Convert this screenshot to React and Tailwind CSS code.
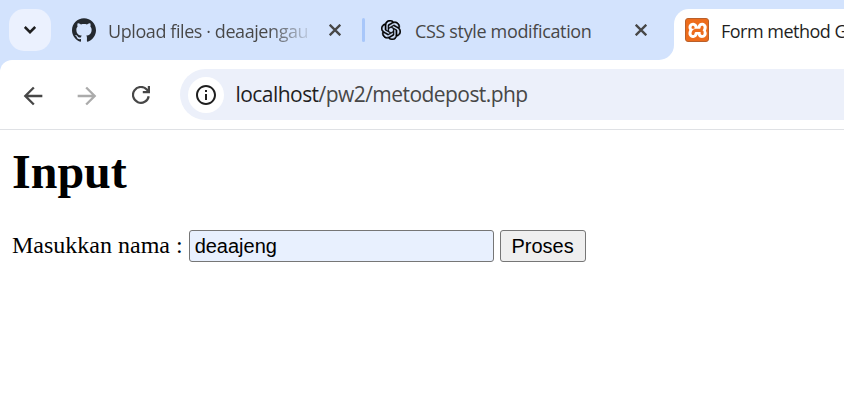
import { SiGithub, SiOpenai, SiXampp } from "react-icons/si";
import { MdArrowBack, MdArrowForward, MdOutlineInfo } from "react-icons/md";

function CloseIcon() {
  return (
    <svg className="h-3 w-3 shrink-0" viewBox="0 0 12 12" fill="none" stroke="#474747" strokeWidth="2.3">
      <path d="M.7.7l10.6 10.6M11.3.7L.7 11.3" />
    </svg>
  );
}

function ReloadIcon() {
  return (
    <svg className="ml-[31px] mt-[26px] h-[18px] w-[18px] shrink-0" viewBox="0 0 18 18" fill="none" stroke="#474747" strokeWidth="2.2">
      <path d="M16.7 10.2A7.9 7.9 0 1 1 14.8 3.6L17 6" />
      <path d="M16.9 0v6.1H10.8" />
    </svg>
  );
}

function TabStrip() {
  return (
    <div className="flex h-[60px] items-start bg-[#d3e3fd] font-['Open_Sans','Noto_Sans',sans-serif] text-[18px]">
      <button className="ml-[9px] mt-[9px] flex h-[42px] w-[42px] shrink-0 items-center justify-center rounded-[15px] bg-[#ebf1fe]">
        <svg className="h-2 w-3" viewBox="0 0 12 8" fill="none" stroke="#1f1f1f" strokeWidth="2.5">
          <path d="M.8 1L6 6.2 11.2 1" />
        </svg>
      </button>
      <div className="ml-[21px] flex h-[60px] w-[290px] shrink-0 items-center">
        <SiGithub className="h-6 w-6 shrink-0 text-[#24292f]" />
        <span className="ml-3 w-[200px] whitespace-nowrap bg-linear-to-r from-[#474747] from-80% to-[#474747]/15 bg-clip-text pt-px leading-7 tracking-[-0.42px] text-transparent">
          Upload files · deaajengau
        </span>
        <span className="ml-[20.5px] flex"><CloseIcon /></span>
      </div>
      <div className="mt-[18px] h-6 w-[3px] shrink-0 rounded-sm bg-[#a8c7fa]" />
      <div className="ml-4 flex h-[60px] w-[278px] shrink-0 items-center">
        <SiOpenai className="h-5 w-5 shrink-0 stroke-black stroke-[0.5] text-black" />
        <span className="ml-[14px] w-[219.5px] whitespace-nowrap pt-px leading-7 tracking-[-0.35px] text-[#474747]">
          CSS style modification
        </span>
        <CloseIcon />
      </div>
      <svg className="mt-[45px] h-[15px] w-[15px] shrink-0" viewBox="0 0 15 15">
        <path d="M15 0v15H0A15 15 0 0 0 15 0z" fill="#fff" />
      </svg>
      <div className="mt-[9px] flex h-[51px] min-w-0 flex-1 items-start overflow-hidden rounded-tl-[15px] bg-white pl-[11px]">
        <span className="mt-[9px] flex h-6 w-6 shrink-0 items-center justify-center overflow-hidden rounded-[3px] border border-[#b9602b] bg-[#ed6c1c]">
          <span className="flex h-5 w-5 shrink-0 items-center justify-center overflow-hidden bg-white">
            <SiXampp className="h-[25px] w-[25px] shrink-0 text-[#ed6c1c]" />
          </span>
        </span>
        <span className="ml-3 mt-2 whitespace-nowrap leading-7 tracking-[-0.5px] text-[#1f1f1f]">
          Form method G
        </span>
      </div>
    </div>
  );
}

function Toolbar() {
  return (
    <div className="bg-[#d3e3fd]">
      <div className="flex h-[70px] items-start rounded-tl-[12px] border-b border-[#dfe1e5] bg-white pl-[19px]">
        <MdArrowBack className="mt-[21.5px] h-[28px] w-[28px] shrink-0 text-[#474747]" />
        <MdArrowForward className="ml-[26px] mt-[21.5px] h-[28px] w-[28px] shrink-0 text-[#ababab]" />
        <ReloadIcon />
        <div className="ml-[30px] mt-[9px] flex h-[51px] flex-1 items-center rounded-l-full bg-[#ecf0fa] pl-2">
          <span className="flex h-9 w-9 items-center justify-center rounded-full bg-white">
            <MdOutlineInfo className="h-6 w-6 text-[#1f1f1f]" />
          </span>
          <span className="ml-[11.5px] whitespace-nowrap pb-px font-['Open_Sans','Noto_Sans',sans-serif] text-[21px] leading-8 tracking-[-0.55px] text-[#474747]">
            <span className="text-[#1f1f1f]">localhost</span>/pw2/metodepost.php
          </span>
        </div>
      </div>
    </div>
  );
}

export default function App() {
  return (
    <div className="h-[410px] w-[844px] overflow-hidden bg-white">
      <TabStrip />
      <Toolbar />
      <main className="px-3 pt-[14px] font-['Liberation_Serif',serif] text-2xl text-black">
        <h1 className="text-[48px] font-bold leading-[55px]">Input</h1>
        <form className="mt-[31px] flex items-center" onSubmit={(e) => e.preventDefault()}>
          <label htmlFor="nama" className="mr-1.5 whitespace-nowrap pb-0.5 leading-7">Masukkan nama :</label>
          <input
            id="nama"
            defaultValue="deaajeng"
            className="h-8 w-[305px] rounded-[3px] border border-[#767676] bg-[#e8f0fe] px-[5px] font-['Liberation_Sans',sans-serif] text-[20px] outline-none"
          />
          <button className="ml-1.5 h-8 w-[86px] rounded-[3px] border border-[#767676] bg-[#efefef] font-['Liberation_Sans',sans-serif] text-[20px] leading-none">
            Proses
          </button>
        </form>
      </main>
    </div>
  );
}
